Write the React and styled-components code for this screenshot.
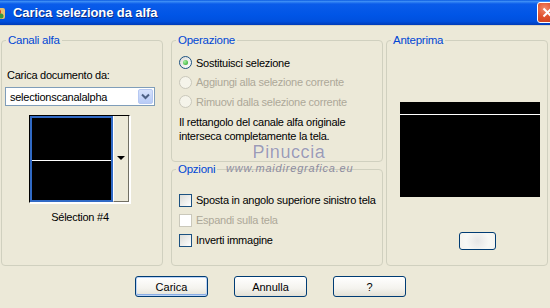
import styled, { createGlobalStyle, css } from 'styled-components'

const GlobalStyle = createGlobalStyle`
  html, body {
    margin: 0;
    padding: 0;
    background: #ECE9D8;
  }
`

const Window = styled.div`
  position: relative;
  width: 550px;
  height: 308px;
  overflow: hidden;
  background: #ECE9D8;
  font-family: "Liberation Sans", Arial, sans-serif;
  font-size: 11px;
  letter-spacing: -0.25px;
  color: #000;
`

const TitleBar = styled.div`
  height: 25px;
  display: flex;
  align-items: center;
  gap: 7px;
  letter-spacing: normal;
  background: linear-gradient(#0A5AE0 0%, #3B8CF5 6%, #0A5CEA 16%, #0055E6 60%, #0050DE 85%, #003CB8 100%);
  border-bottom: 1px solid #D8D4C4;
`

const AppIcon = styled.svg`
  width: 14px;
  height: 16px;
  margin-left: -8px;
  flex-shrink: 0;
`

const Title = styled.span`
  flex: 1;
  color: #fff;
  font-weight: bold;
  font-size: 13px;
  letter-spacing: -0.1px;
  text-shadow: 1px 1px 0 #0A2A80;
`

const CloseButton = styled.div`
  width: 21px;
  height: 21px;
  margin-right: -8px;
  border: 1px solid #fff;
  border-radius: 3px;
  background: radial-gradient(circle at 35% 30%, #F08A6C 0%, #E0532E 45%, #C23A17 100%);
  display: flex;
  align-items: center;
  justify-content: flex-start;
  padding-left: 4px;
  box-sizing: border-box;
`

const Body = styled.div`
  display: flex;
  padding: 8px 2px 0 1px;
  height: 232px;
`

const Group = styled.fieldset`
  margin: 0;
  padding: 0;
  min-width: 0;
  box-sizing: border-box;
  border: 1px solid #D0D0BF;
  border-radius: 4px;
  display: flex;
  flex-direction: column;
  width: ${({ $w }) => $w}px;
  height: ${({ $h }) => ($h ? `${$h}px` : 'auto')};
  flex: ${({ $grow }) => ($grow ? 1 : 'none')};
`

const Legend = styled.legend`
  margin-left: 4px;
  padding: 0 2px;
  line-height: 13px;
  color: #0046D5;
  font-size: 11.5px;
`

const MiddleColumn = styled.div`
  display: flex;
  flex-direction: column;
  margin-left: 8px;
  width: 212px;
  gap: 1px;
`

const Spacer = styled.div`
  width: 3px;
`

const Inner = styled.div`
  display: flex;
  flex-direction: column;
  padding: ${({ $pad }) => $pad};
`

const Label = styled.div`
  line-height: 14px;
  white-space: nowrap;
  margin-top: ${({ $mt }) => $mt || 0}px;
  padding-left: ${({ $pl }) => $pl || 0}px;
  text-align: ${({ $center }) => ($center ? 'center' : 'left')};
`

const Select = styled.div`
  margin-top: 5px;
  width: 150px;
  height: 19px;
  box-sizing: border-box;
  border: 1px solid #7F9DB9;
  background: #fff;
  display: flex;
  align-items: center;
  padding-left: 4px;
`

const SelectText = styled.span`
  flex: 1;
`

const SelectArrow = styled.div`
  width: 15px;
  height: 15px;
  margin-right: 1px;
  border-radius: 2px;
  background: linear-gradient(#D6E2FC, #B8CBF6);
  border: 1px solid #B6C8F2;
  box-sizing: border-box;
  display: flex;
  align-items: center;
  justify-content: center;
`

const Thumb = styled.div`
  align-self: center;
  margin: 9px 0 0 -1px;
  width: 101px;
  height: 88px;
  box-sizing: border-box;
  border: 1px solid #000;
  border-bottom-color: #fff;
  border-right-color: #fff;
  box-shadow: 1px 1px 0 #fff;
  display: flex;
`

const ThumbImage = styled.div`
  width: 83px;
  box-sizing: border-box;
  border: 2px solid #316AC5;
  background: #000;
  padding-top: 42px;
`

const WhiteLine = styled.div`
  height: 1px;
  background: #fff;
`

const ThumbButton = styled.div`
  flex: 1;
  background: #ECE9D8;
  border-left: 1px solid #fff;
  border-bottom: 1px solid #716F64;
  border-right: 1px solid #716F64;
  display: flex;
  justify-content: center;
  padding-top: 40px;
`

const Triangle = styled.div`
  width: 0;
  height: 0;
  border-left: 4px solid transparent;
  border-right: 4px solid transparent;
  border-top: 4px solid #000;
`

const OptionRow = styled.div`
  display: flex;
  align-items: center;
  gap: 4px;
  white-space: nowrap;
  height: ${({ $h }) => $h}px;
  color: ${({ $disabled }) => ($disabled ? '#ACA899' : '#000')};
`

const Radio = styled.span`
  width: 13px;
  height: 13px;
  flex-shrink: 0;
  box-sizing: border-box;
  border-radius: 50%;
  border: 1px solid ${({ $disabled }) => ($disabled ? '#CAC8BB' : '#1C5180')};
  background: ${({ $disabled }) =>
    $disabled ? '#F5F4EA' : 'linear-gradient(135deg, #DCDCD7, #FFFFFF)'};
  display: flex;
  align-items: center;
  justify-content: center;
  ${({ $checked }) =>
    $checked &&
    css`
      &::after {
        content: '';
        width: 5px;
        height: 5px;
        border-radius: 50%;
        background: radial-gradient(circle at 35% 35%, #A6F2A0, #21A121);
      }
    `}
`

const Checkbox = styled.span`
  width: 13px;
  height: 13px;
  flex-shrink: 0;
  box-sizing: border-box;
  border: 1px solid ${({ $disabled }) => ($disabled ? '#CAC8BB' : '#1C5180')};
  background: ${({ $disabled }) =>
    $disabled ? '#FFFFFF' : 'linear-gradient(135deg, #DCDCD7, #FFFFFF)'};
`

const Preview = styled.div`
  margin: 55px 0 0 13px;
  width: 140px;
  height: 95px;
  background: #000;
  padding-top: 12px;
  box-sizing: border-box;
`

const SmallButton = styled.div`
  margin: 35px 0 0 72px;
  width: 37px;
  height: 18px;
  box-sizing: border-box;
  border: 1px solid #003C74;
  border-radius: 3px;
  background: radial-gradient(circle, #E6E6E6 0%, #F8F8F5 60%, #F4F3EE 100%);
`

const Footer = styled.div`
  display: flex;
  gap: 26px;
  padding: 10px 0 0 135px;
`

const Button = styled.button`
  width: 73px;
  height: 21px;
  box-sizing: border-box;
  border: 1px solid #003C74;
  border-radius: 3px;
  background: linear-gradient(#FFFFFF 0%, #F4F3EE 60%, #E3E1D6 100%);
  font-family: "Liberation Sans", Arial, sans-serif;
  font-size: 11px;
  color: #000;
  padding: 0;
  ${({ $default }) =>
    $default &&
    css`
      box-shadow: inset 0 0 0 1px #BCD4F6, inset 0 -1px 0 1px #89ADE4;
    `}
`

const Watermark = styled.div`
  position: absolute;
  left: 226px;
  top: 143px;
  width: 126px;
  text-align: center;
  letter-spacing: normal;
  pointer-events: none;
`

const WatermarkName = styled.div`
  font-family: "Liberation Sans", Arial, sans-serif;
  font-size: 18px;
  letter-spacing: 0.6px;
  line-height: 18px;
  color: #9C9CB4;
  text-shadow: 0 0 1px #ffffff;
`

const WatermarkUrl = styled.div`
  font-family: "Liberation Sans", Arial, sans-serif;
  font-style: italic;
  font-size: 11px;
  letter-spacing: 0.8px;
  line-height: 12px;
  margin-top: 1px;
  color: #8C8CA0;
`

export default function App() {
  return (
    <>
      <GlobalStyle />
      <Window>
        <TitleBar>
          <AppIcon viewBox="0 0 14 16">
            <rect x="1" y="3" width="12" height="11" rx="2" fill="#E8C070" />
            <circle cx="6" cy="7" r="3" fill="#D04020" />
            <circle cx="9" cy="11" r="2.5" fill="#3A9A3A" />
          </AppIcon>
          <Title>Carica selezione da alfa</Title>
          <CloseButton>
            <svg width="11" height="11" viewBox="0 0 11 11">
              <path d="M1.5 1.5 L9.5 9.5 M9.5 1.5 L1.5 9.5" stroke="#fff" strokeWidth="2" />
            </svg>
          </CloseButton>
        </TitleBar>

        <Body>
          <Group $w={162} $h={232}>
            <Legend>Canali alfa</Legend>
            <Inner $pad="21px 7px 0 3px">
              <Label $pl={2}>Carica documento da:</Label>
              <Select>
                <SelectText>selectionscanalalpha</SelectText>
                <SelectArrow>
                  <svg width="9" height="7" viewBox="0 0 9 7">
                    <path d="M1 1.5 L4.5 5 L8 1.5" stroke="#4D6185" strokeWidth="2" fill="none" />
                  </svg>
                </SelectArrow>
              </Select>
              <Thumb>
                <ThumbImage>
                  <WhiteLine />
                </ThumbImage>
                <ThumbButton>
                  <Triangle />
                </ThumbButton>
              </Thumb>
              <Label $center $mt={7}>Sélection #4</Label>
            </Inner>
          </Group>

          <MiddleColumn>
            <Group $w={212} $h={128}>
              <Legend>Operazione</Legend>
              <Inner $pad="6px 4px 0 7px">
                <OptionRow $h={19.5}>
                  <Radio $checked />
                  Sostituisci selezione
                </OptionRow>
                <OptionRow $h={19.5} $disabled>
                  <Radio $disabled />
                  Aggiungi alla selezione corrente
                </OptionRow>
                <OptionRow $h={19.5} $disabled>
                  <Radio $disabled />
                  Rimuovi dalla selezione corrente
                </OptionRow>
                <Label $mt={3}>
                  Il rettangolo del canale alfa originale
                  <br />
                  interseca completamente la tela.
                </Label>
              </Inner>
            </Group>
            <Group $w={212} $grow>
              <Legend>Opzioni</Legend>
              <Inner $pad="14px 4px 0 7px">
                <OptionRow $h={20}>
                  <Checkbox />
                  Sposta in angolo superiore sinistro tela
                </OptionRow>
                <OptionRow $h={20} $disabled>
                  <Checkbox $disabled />
                  Espandi sulla tela
                </OptionRow>
                <OptionRow $h={20}>
                  <Checkbox />
                  Inverti immagine
                </OptionRow>
              </Inner>
            </Group>
          </MiddleColumn>

          <Spacer />

          <Group $w={162} $h={232}>
            <Legend>Anteprima</Legend>
            <Preview>
              <WhiteLine />
            </Preview>
            <SmallButton />
          </Group>
        </Body>

        <Footer>
          <Button $default>Carica</Button>
          <Button>Annulla</Button>
          <Button>?</Button>
        </Footer>

        <Watermark>
          <WatermarkName>Pinuccia</WatermarkName>
          <WatermarkUrl>www.maidiregrafica.eu</WatermarkUrl>
        </Watermark>
      </Window>
    </>
  )
}
